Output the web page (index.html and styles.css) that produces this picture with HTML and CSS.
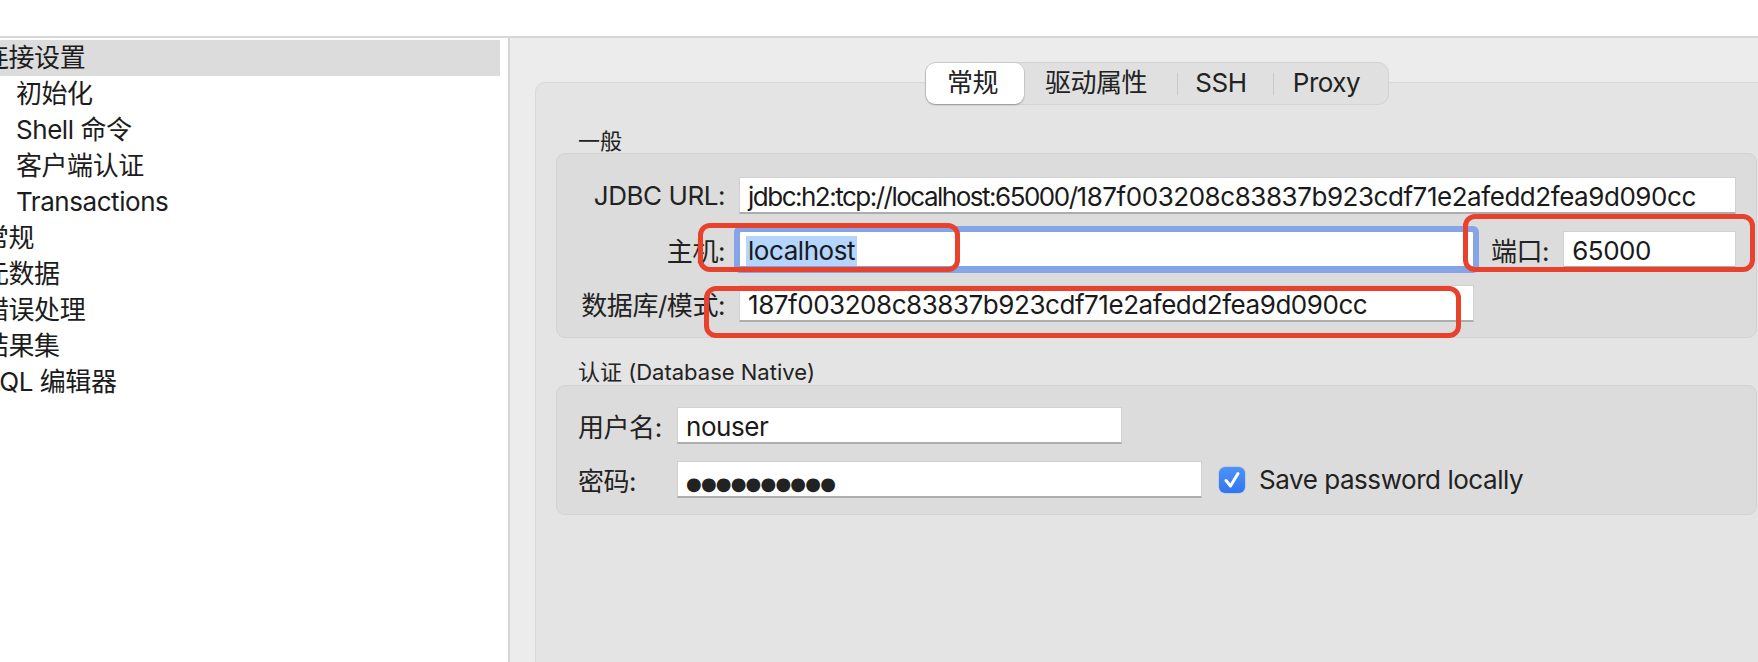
FILE: index.html
```html
<!DOCTYPE html>
<html lang="zh">
<head>
<meta charset="utf-8">
<title>连接设置</title>
<link rel="stylesheet" href="styles.css">
</head>
<body>
<div class="titlebar"></div>
<div class="main">
  <aside class="sidebar">
    <ul class="tree">
      <li class="item sel">连接设置</li>
      <li class="item child">初始化</li>
      <li class="item child">Shell 命令</li>
      <li class="item child">客户端认证</li>
      <li class="item child">Transactions</li>
      <li class="item">常规</li>
      <li class="item">元数据</li>
      <li class="item">错误处理</li>
      <li class="item">结果集</li>
      <li class="item">SQL 编辑器</li>
    </ul>
  </aside>
  <section class="content">
    <div class="tabbox">
      <div class="seg-wrap">
        <div class="seg">
          <div class="seg-item seg-sel">常规</div>
          <div class="seg-item seg-drv">驱动属性</div>
          <span class="seg-sep"></span>
          <div class="seg-item seg-ssh">SSH</div>
          <span class="seg-sep"></span>
          <div class="seg-item seg-proxy">Proxy</div>
        </div>
      </div>

      <div class="gtitle gtitle-first">一般</div>
      <div class="group">
        <div class="row">
          <div class="lbl">JDBC URL:</div>
          <div class="field f-url"><span class="url-prefix">jdbc:h2:tcp://localhost:65000/</span>187f003208c83837b923cdf71e2afedd2fea9d090cc</div>
        </div>
        <div class="row">
          <div class="lbl">主机:</div>
          <div class="field f-host focus"><span class="selected">localhost</span></div>
          <div class="lbl-port">端口:</div>
          <div class="field f-port">65000</div>
        </div>
        <div class="row">
          <div class="lbl">数据库/模式:</div>
          <div class="field f-db">187f003208c83837b923cdf71e2afedd2fea9d090cc</div>
        </div>
      </div>

      <div class="gtitle gtitle-second">认证 (Database Native)</div>
      <div class="group group-auth">
        <div class="row">
          <div class="lbl2">用户名:</div>
          <div class="field f-user">nouser</div>
        </div>
        <div class="row">
          <div class="lbl2">密码:</div>
          <div class="field f-pass"><span class="dots">●●●●●●●●●●</span></div>
          <div class="check">
            <svg viewBox="0 0 26 26" width="26" height="26"><path d="M7 13.5 L11.5 19 L19 6.5" fill="none" stroke="#fff" stroke-width="3" stroke-linecap="round" stroke-linejoin="round"/></svg>
          </div>
          <div class="check-label">Save password locally</div>
        </div>
      </div>
    </div>
  </section>
</div>
<div class="annot annot-host"></div>
<div class="annot annot-port"></div>
<div class="annot annot-db"></div>
</body>
</html>
```
FILE: styles.css
```css
* { box-sizing: border-box; }
html, body { margin: 0; padding: 0; }
body {
  width: 1758px;
  height: 662px;
  overflow: hidden;
  position: relative;
  background: #ececec;
  font-family: "Inter", "Noto Sans CJK SC", sans-serif;
  font-size: 26px;
  letter-spacing: -0.45px;
  color: #222;
}
.titlebar {
  height: 38px;
  background: #fff;
  border-bottom: 2px solid #d7d7d7;
}
.main {
  display: flex;
  height: 624px;
}
.sidebar {
  width: 510px;
  flex: none;
  background: #fff;
  border-right: 2px solid #d5d5d5;
  overflow: hidden;
  padding-top: 2px;
}
.tree {
  list-style: none;
  margin: 0 0 0 -17px;
  padding: 0;
  width: 517px;
}
.item {
  height: 36px;
  line-height: 36px;
  white-space: nowrap;
  color: #1c1c1c;
}
.item.sel { background: #dcdcdc; }
.item.child { padding-left: 33px; }

.content {
  flex: 1;
  min-width: 0;
  overflow: hidden;
  padding: 44px 0 0 25px;
}
.tabbox {
  width: 1244px;
  height: 700px;
  background: #e4e4e4;
  border: 1px solid #d9d9d9;
  border-radius: 10px;
  padding: 0 21px 0 20px;
}
.seg-wrap {
  display: flex;
  justify-content: center;
  margin-top: -21px;
}
.seg {
  display: flex;
  align-items: center;
  height: 43px;
  background: #e0e0e0;
  border: 1px solid #d3d3d3;
  border-radius: 11px;
}
.seg-item {
  height: 41px;
  line-height: 40px;
  text-align: center;
  color: #222;
  padding-right: 8px;
}
.seg-sel {
  width: 98px;
  padding-right: 4px;
  background: #fff;
  border-radius: 9px;
  box-shadow: 0 1px 2px rgba(0,0,0,0.28), 0 0 0 0.5px rgba(0,0,0,0.08);
}
.seg-drv { width: 153px; }
.seg-ssh { width: 95px; }
.seg-proxy { width: 114px; }
.seg-sep {
  width: 1px;
  height: 22px;
  background: #c9c9c9;
}

.gtitle {
  font-size: 22px;
  letter-spacing: 0;
  line-height: 24px;
  padding-left: 22px;
  color: #222;
}
.gtitle-first { margin-top: 24px; }
.gtitle-second { margin-top: 22px; margin-bottom: 1px; }

.group {
  background: #dcdcdc;
  border: 1px solid #d2d2d2;
  border-radius: 9px;
  padding: 23px 20px 15px 21px;
}
.group-auth { padding: 21px 20px 16px 21px; }
.row {
  display: flex;
  align-items: center;
  height: 37px;
}
.row + .row { margin-top: 17px; }
.lbl {
  width: 147px;
  flex: none;
  text-align: right;
  margin-right: 14px;
  white-space: nowrap;
}
.lbl2 {
  width: 99px;
  flex: none;
  white-space: nowrap;
}
.field {
  height: 37px;
  background: #fff;
  border: 1px solid #d0d0d0;
  border-bottom: 2px solid #adadad;
  padding: 2px 8px 0;
  line-height: 34px;
  white-space: nowrap;
  overflow: hidden;
  color: #1a1a1a;
}
.url-prefix { letter-spacing: -1.5px; }
.f-url { flex: 1; min-width: 0; }
.f-host, .f-db { width: 735px; flex: none; }
.f-host.focus {
  border-color: #84a3e6;
  border-radius: 2px;
  box-shadow: 0 0 0 5px #86a5e7;
  padding-left: 6px;
}
.selected {
  display: inline-block;
  background: #b4d5fe;
  line-height: 30px;
  padding: 0 2px;
}
.lbl-port {
  margin-left: 17px;
  margin-right: 14px;
  white-space: nowrap;
}
.f-port { flex: 1; min-width: 0; }
.f-user { width: 445px; flex: none; }
.f-pass { width: 525px; flex: none; }
.dots {
  font-family: "DejaVu Sans", sans-serif;
  font-size: 18px;
  letter-spacing: -0.8px;
  color: #222;
}
.check {
  width: 26px;
  height: 26px;
  margin-left: 17px;
  border-radius: 6px;
  background: linear-gradient(#4d93f8, #2f76f1);
  box-shadow: 0 0 0 0.5px rgba(0,0,0,0.15);
  display: flex;
}
.check-label {
  margin-left: 14px;
  white-space: nowrap;
}

.annot {
  position: absolute;
  border: 5px solid #e8412c;
  border-radius: 12px;
}
.annot-host { left: 698px; top: 223px; width: 262px; height: 49px; }
.annot-port { left: 1463px; top: 214px; width: 292px; height: 58px; }
.annot-db { left: 704px; top: 286px; width: 757px; height: 52px; }
```
